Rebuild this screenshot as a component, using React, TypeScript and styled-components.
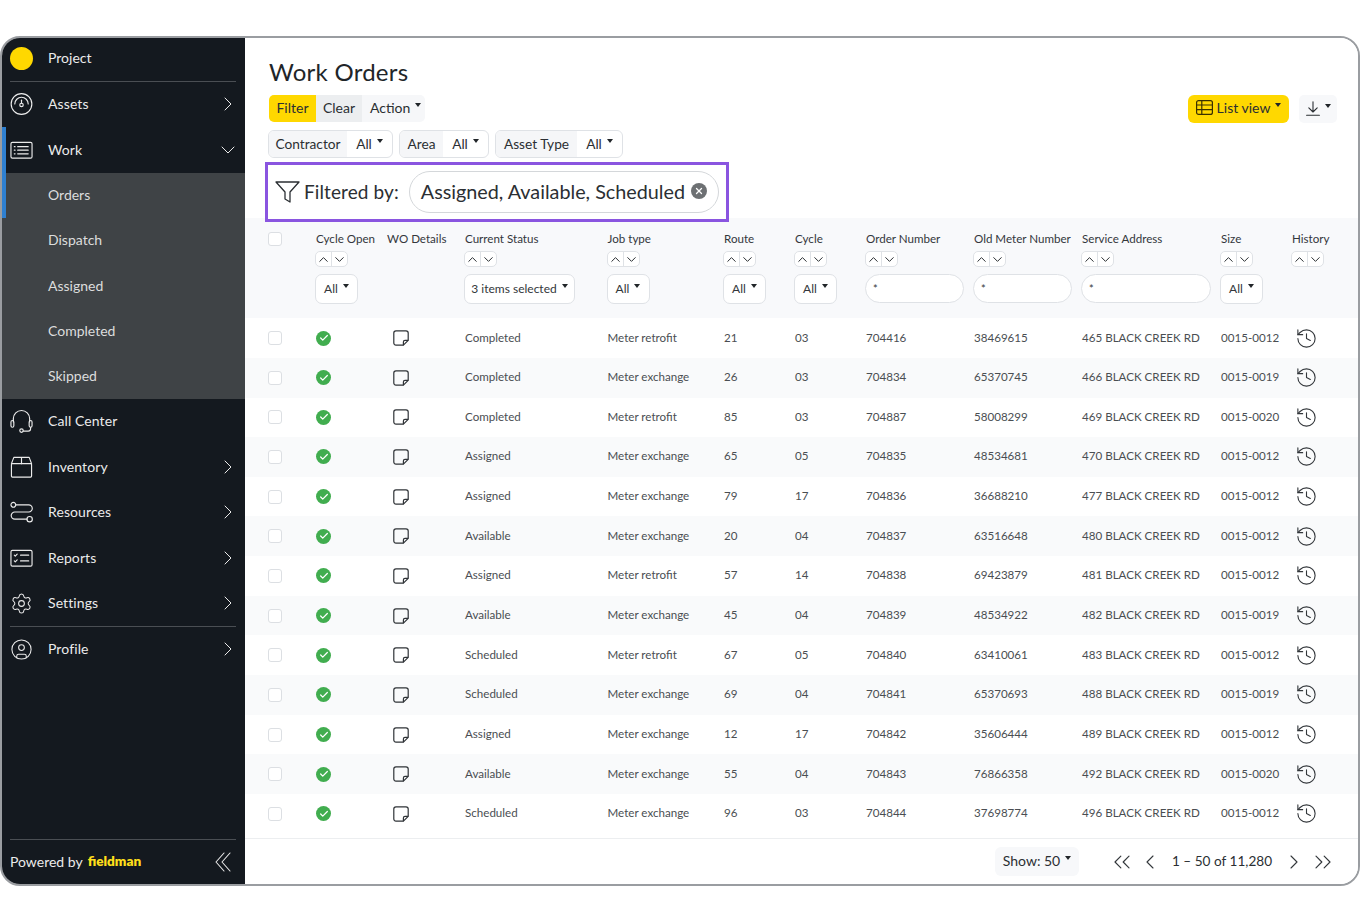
import React from "react";
import styled, { createGlobalStyle } from "styled-components";
import { ChevronRight, ChevronDown, ChevronUp, ChevronLeft, ChevronsLeft, ChevronsRight, History, Settings, CircleUser, Check, X } from "lucide-react";

const FONT = `"Lato", "Noto Sans", sans-serif`;

const Global = createGlobalStyle`
  html, body { margin: 0; padding: 0; background: #fff; }
  body { font-family: ${FONT}; color: #2b2f33; }
  * { box-sizing: border-box; }
`;

const Page = styled.div`
  width: 1360px;
  height: 920px;
  padding-top: 36px;
`;
const Frame = styled.div`
  width: 1360px;
  height: 850px;
  border: 2px solid #9a9da1;
  border-radius: 20px;
  overflow: hidden;
  display: flex;
  background: #fff;
`;
const Sidebar = styled.aside`
  width: 243px;
  flex: none;
  background: #14191f;
  color: #ebebeb;
  display: flex;
  flex-direction: column;
`;
const Divider = styled.div`
  height: 1px;
  background: #4a4e53;
  margin: 0 9px 0 8px;
  flex: none;
`;
const ProjectRow = styled.div`
  height: 43px;
  display: flex;
  align-items: center;
  padding-left: 8px;
  gap: 15px;
  font-size: 14px;
`;
const ProjectLabel = styled.span`
  padding-bottom: 5px;
`;
const Dot = styled.span`
  width: 23px;
  height: 23px;
  border-radius: 50%;
  background: #ffd800;
  margin-bottom: 3px;
`;
const NavGroup = styled.div`
  position: relative;
  flex: none;
`;
const ActiveBar = styled.span`
  position: absolute;
  left: 0;
  top: 0;
  width: 4px;
  height: 91px;
  background: #2f80d0;
  z-index: 1;
`;
const NavRow = styled.div`
  height: 45.4px;
  display: flex;
  align-items: center;
  padding: 0 5px 1px 8px;
  font-size: 14px;
  flex: none;
`;
const NavIcon = styled.span`
  width: 23px;
  height: 23px;
  margin-right: 15px;
  display: flex;
  align-items: center;
  justify-content: center;
  flex: none;
`;
const NavLabel = styled.span`
  flex: 1;
  letter-spacing: 0.1px;
  padding-bottom: 1px;
`;
const SubMenu = styled.div`
  background: #3f4346;
  color: #dcdddd;
`;
const SubRow = styled.div`
  height: 45.3px;
  display: flex;
  align-items: center;
  padding: 0 0 2px 46px;
  font-size: 14px;
`;
const SideFooter = styled.div`
  margin-top: auto;
  flex: none;
`;
const PoweredRow = styled.div`
  height: 44px;
  display: flex;
  align-items: center;
  padding: 0 14px 1px 8px;
  font-size: 14px;
`;
const PoweredText = styled.span`
  padding-bottom: 1px;
`;
const Brand = styled.span`
  color: #ffdf1a;
  font-weight: 800;
  font-size: 13.6px;
  margin-left: 5px;
  padding-bottom: 1px;
  flex: 1;
`;

const Main = styled.main`
  flex: 1;
  min-width: 0;
  display: flex;
  flex-direction: column;
  background: #fff;
`;
const Title = styled.h1`
  margin: 0;
  padding: 19px 0 0 24px;
  font-size: 24px;
  line-height: 30px;
  font-weight: 400;
  color: #212529;
  height: 57px;
  letter-spacing: 0.25px;
`;
const ActionBar = styled.div`
  display: flex;
  justify-content: space-between;
  align-items: center;
  padding: 0 21px 0 24px;
  height: 27px;
`;
const BtnGroup = styled.div`
  display: flex;
  height: 27px;
  border-radius: 5px;
  overflow: hidden;
  font-size: 14px;
`;
const GroupBtn = styled.div<{ $tone: "yellow" | "grey" | "light"; $w: number }>`
  width: ${(p) => p.$w}px;
  display: flex;
  align-items: center;
  justify-content: ${(p) => (p.$tone === "light" ? "flex-start" : "center")};
  padding: 0 0 2px ${(p) => (p.$tone === "light" ? 8 : 0)}px;
  background: ${(p) => (p.$tone === "yellow" ? "#ffd800" : p.$tone === "grey" ? "#eceef0" : "#f6f7f9")};
`;
const Caret = styled.span`
  display: inline-block;
  width: 0;
  height: 0;
  border-left: 3.5px solid transparent;
  border-right: 3.5px solid transparent;
  border-top: 4px solid #212529;
  margin-left: 5px;
  position: relative;
  top: -3px;
`;
const RightTools = styled.div`
  display: flex;
  gap: 10px;
  align-items: center;
`;
const ListViewBtn = styled.div`
  width: 101px;
  height: 28px;
  background: #ffd800;
  border-radius: 6px;
  display: flex;
  align-items: center;
  justify-content: center;
  padding-bottom: 2px;
  font-size: 14px;
`;
const ListViewText = styled.span`
  margin-left: 4px;
`;
const DownloadBtn = styled.div`
  width: 38px;
  height: 28px;
  background: #f7f8fa;
  border-radius: 5px;
  display: flex;
  align-items: center;
  justify-content: center;
`;
const FilterRow = styled.div`
  display: flex;
  gap: 6px;
  padding: 8px 0 0 23px;
  height: 36px;
  flex: none;
`;
const FilterGroup = styled.div`
  height: 28px;
  border: 1px solid #dfe2e6;
  border-radius: 6px;
  display: flex;
  overflow: hidden;
  font-size: 13.7px;
`;
const FilterName = styled.div<{ $w: number }>`
  width: ${(p) => p.$w}px;
  background: #f5f6f8;
  display: flex;
  align-items: center;
  justify-content: center;
  padding-bottom: 1px;
`;
const FilterValue = styled.div<{ $w: number }>`
  width: ${(p) => p.$w}px;
  display: flex;
  align-items: center;
  justify-content: center;
  padding-bottom: 1px;
`;
const FilteredBox = styled.div`
  position: relative;
  z-index: 1;
  margin: 4px 0 -4px 20px;
  width: 464px;
  height: 60px;
  border: 3px solid #8a55e0;
  background: #fff;
  display: flex;
  align-items: center;
  padding: 0 0 1px 7px;
  flex: none;
`;
const FilteredLabel = styled.span`
  font-size: 19px;
  margin: 0 10px 1px 4px;
  color: #2b2f33;
  letter-spacing: 0.1px;
`;
const Chip = styled.div`
  width: 310px;
  height: 42px;
  border: 1px solid #d4d7da;
  border-radius: 21px;
  display: flex;
  align-items: center;
  justify-content: space-between;
  padding: 0 11px 1px 11px;
  font-size: 19.8px;
  white-space: nowrap;
`;
const ChipClose = styled.span`
  width: 16px;
  height: 16px;
  border-radius: 50%;
  background: #6d7073;
  display: flex;
  align-items: center;
  justify-content: center;
  flex: none;
`;

const COLS = "48px 71px 78px 142.5px 116.5px 71px 71px 108px 108px 139px 71px 1fr";

const TableHead = styled.div`
  display: grid;
  grid-template-columns: ${COLS};
  padding-left: 23px;
  height: 100.2px;
  background: #f8f9fb;
  flex: none;
  padding-top: 14px;
`;
const HeadCell = styled.div`
  font-size: 11.6px;
  line-height: 14px;
  color: #33373b;
  white-space: nowrap;
  display: flex;
  flex-direction: column;
  align-items: flex-start;
`;
const SortBox = styled.div`
  width: 33px;
  height: 16px;
  margin-top: 5px;
  margin-left: -1px;
  border: 1px solid #dfe2e6;
  border-radius: 5px;
  background: #fff;
  display: flex;
  color: #2b2f33;
`;
const SortHalf = styled.span<{ $line?: boolean }>`
  flex: 1;
  display: flex;
  align-items: center;
  justify-content: center;
  border-left: ${(p) => (p.$line ? "1px solid #dfe2e6" : "none")};
`;
const HeadSelect = styled.div<{ $w: number }>`
  width: ${(p) => p.$w}px;
  height: 30px;
  margin-top: 7px;
  margin-left: -1px;
  background: #fff;
  border: 1px solid #dfe2e6;
  border-radius: 7px;
  display: flex;
  align-items: center;
  justify-content: center;
  font-size: 12px;
`;
const HeadInput = styled.div<{ $w: number }>`
  width: ${(p) => p.$w}px;
  height: 29px;
  margin-top: 7px;
  margin-left: -1px;
  background: #fff;
  border: 1px solid #dfe2e6;
  border-radius: 15px;
  padding-left: 7px;
  display: flex;
  align-items: center;
  font-size: 11px;
`;
const Rows = styled.div`
  flex: none;
`;
const Row = styled.div<{ $odd: boolean }>`
  display: grid;
  grid-template-columns: ${COLS};
  padding-left: 23px;
  height: 39.67px;
  align-items: center;
  background: ${(p) => (p.$odd ? "#f9fafb" : "#fff")};
  font-size: 11.6px;
  color: #4a4e52;
  white-space: nowrap;
`;
const CellText = styled.span`
  padding-bottom: 2px;
`;
const Checkbox = styled.span`
  display: block;
  width: 14px;
  height: 14px;
  border: 1px solid #dcdfe3;
  border-radius: 3px;
  background: #fff;
`;
const OkBadge = styled.span`
  width: 15px;
  height: 15px;
  border-radius: 50%;
  background: #41ad4f;
  display: flex;
  align-items: center;
  justify-content: center;
`;
const NoteCell = styled.span`
  display: flex;
  padding-left: 6px;
`;
const HistoryCell = styled.span`
  display: flex;
  padding-left: 2.5px;
  color: #33373b;
`;
const Pager = styled.footer`
  margin-top: auto;
  height: 46px;
  border-top: 1px solid #eceef0;
  display: flex;
  align-items: center;
  justify-content: flex-end;
  padding-right: 21px;
  font-size: 14px;
  flex: none;
  color: #2b2f33;
`;
const ShowBtn = styled.div`
  width: 84px;
  height: 29px;
  background: #f7f8fa;
  border-radius: 6px;
  display: flex;
  align-items: center;
  justify-content: center;
  padding-bottom: 2px;
  margin-right: 29px;
`;
const PagerIcon = styled.span<{ $gap: number }>`
  display: flex;
  margin-right: ${(p) => p.$gap}px;
  color: #33373b;
`;
const PagerText = styled.span`
  width: 101px;
  margin-right: 9px;
  padding-bottom: 2px;
  white-space: nowrap;
  font-size: 13.6px;
`;

const Svg = ({ children, size = 24 }: { children: React.ReactNode; size?: number }) => (
  <svg width={size} height={size} viewBox="0 0 24 24" fill="none" stroke="currentColor" strokeWidth={1.2} strokeLinecap="round" strokeLinejoin="round">
    {children}
  </svg>
);

const GaugeIcon = () => (
  <Svg>
    <circle cx="12" cy="12" r="10.8" />
    <path d="M5 12a7 7 0 0 1 14 0" />
    <circle cx="12" cy="13" r="1.8" />
    <path d="M12 11V8" />
  </Svg>
);
const ListIcon = () => (
  <Svg>
    <rect x="1" y="4" width="22" height="16.5" rx="1.5" />
    <path d="M8 8.5h11M8 12.2h11M8 16h11" />
    <path d="M4.5 8.5h.8M4.5 12.2h.8M4.5 16h.8" />
  </Svg>
);
const HeadsetIcon = () => (
  <Svg>
    <path d="M3.5 13V9.5a8.5 8.5 0 0 1 17 0V13" />
    <rect x="1" y="11.5" width="3" height="7" rx="1.5" />
    <rect x="20" y="11.5" width="3" height="7" rx="1.5" />
    <path d="M21.5 18.5v1.5a2.5 2.5 0 0 1-2.5 2.5h-5" />
    <circle cx="12" cy="22" r="1.8" />
  </Svg>
);
const BoxIcon = () => (
  <Svg>
    <rect x="1.5" y="8.5" width="21" height="14" rx="1" />
    <path d="M1.5 8.5 4 2h16l2.5 6.5M12 2v6.5" />
  </Svg>
);
const RouteIcon = () => (
  <Svg>
    <circle cx="3.5" cy="4.5" r="2.5" />
    <circle cx="20.5" cy="19.5" r="2.8" />
    <path d="M6 4.5h13.5a3.5 3.5 0 0 1 0 7.5H5a3.7 3.7 0 0 0 0 7.5h12.7" />
  </Svg>
);
const ReportIcon = () => (
  <Svg>
    <rect x="1" y="4" width="22" height="16.5" rx="1.5" />
    <path d="M11 9h8.5M11 15h8.5" />
    <path d="M4.5 9l1 1 2-2M4.5 15l1 1 2-2" />
  </Svg>
);
const NoteIcon = () => (
  <svg width="16" height="16" viewBox="0 0 16 16" fill="none" stroke="#2f3337" strokeWidth={1.2} strokeLinejoin="round">
    <path d="M3 .8h10A2.2 2.2 0 0 1 15.2 3v7.4l-4.8 4.8H3A2.2 2.2 0 0 1 .8 13V3A2.2 2.2 0 0 1 3 .8Z" />
    <path d="M15.2 10.4h-3.2a1.6 1.6 0 0 0-1.6 1.6v3.2" />
  </svg>
);
const FunnelIcon = () => (
  <svg width="25" height="22" viewBox="0 0 25 22" fill="none" stroke="#2b2f33" strokeWidth={1.3} strokeLinejoin="round">
    <path d="M1 1h23l-9 10v10l-5-3v-7L1 1Z" />
  </svg>
);
const TableIcon = () => (
  <svg width="17" height="15" viewBox="0 0 17 15" fill="none" stroke="#3a3000" strokeWidth={1.2}>
    <rect x=".6" y=".6" width="15.8" height="13.8" rx="2" />
    <path d="M.6 5h15.8M.6 9.7h15.8M5.8 .6v13.8" />
  </svg>
);
const DownloadIcon = () => (
  <svg width="14" height="15" viewBox="0 0 14 15" fill="none" stroke="#2b2f33" strokeWidth={1.1} strokeLinecap="round" strokeLinejoin="round">
    <path d="M7 .8v10M2.8 6.8 7 11l4.2-4.2M.6 14.2h12.8" />
  </svg>
);
const CollapseIcon = () => (
  <svg width="16" height="20" viewBox="0 0 16 20" fill="none" stroke="#ebebeb" strokeWidth={1.1} strokeLinecap="round" strokeLinejoin="round">
    <path d="M9 1 1 10l8 9M15 1l-8 9 8 9" />
  </svg>
);

const Chev = () => <ChevronRight size={24} strokeWidth={1} />;

const rows = [
  ["Completed", "Meter retrofit", "21", "03", "704416", "38469615", "465 BLACK CREEK RD", "0015-0012"],
  ["Completed", "Meter exchange", "26", "03", "704834", "65370745", "466 BLACK CREEK RD", "0015-0019"],
  ["Completed", "Meter retrofit", "85", "03", "704887", "58008299", "469 BLACK CREEK RD", "0015-0020"],
  ["Assigned", "Meter exchange", "65", "05", "704835", "48534681", "470 BLACK CREEK RD", "0015-0012"],
  ["Assigned", "Meter exchange", "79", "17", "704836", "36688210", "477 BLACK CREEK RD", "0015-0012"],
  ["Available", "Meter exchange", "20", "04", "704837", "63516648", "480 BLACK CREEK RD", "0015-0012"],
  ["Assigned", "Meter retrofit", "57", "14", "704838", "69423879", "481 BLACK CREEK RD", "0015-0012"],
  ["Available", "Meter exchange", "45", "04", "704839", "48534922", "482 BLACK CREEK RD", "0015-0019"],
  ["Scheduled", "Meter retrofit", "67", "05", "704840", "63410061", "483 BLACK CREEK RD", "0015-0012"],
  ["Scheduled", "Meter exchange", "69", "04", "704841", "65370693", "488 BLACK CREEK RD", "0015-0019"],
  ["Assigned", "Meter exchange", "12", "17", "704842", "35606444", "489 BLACK CREEK RD", "0015-0012"],
  ["Available", "Meter exchange", "55", "04", "704843", "76866358", "492 BLACK CREEK RD", "0015-0020"],
  ["Scheduled", "Meter exchange", "96", "03", "704844", "37698774", "496 BLACK CREEK RD", "0015-0012"],
];

const Sort = () => (
  <SortBox>
    <SortHalf><ChevronUp size={15} strokeWidth={1.6} /></SortHalf>
    <SortHalf $line><ChevronDown size={15} strokeWidth={1.6} /></SortHalf>
  </SortBox>
);

const Select = ({ w, label }: { w: number; label: string }) => (
  <HeadSelect $w={w}>
    {label}
    <Caret />
  </HeadSelect>
);

export default function App() {
  return (
    <Page>
      <Global />
      <Frame>
        <Sidebar>
          <ProjectRow>
            <Dot />
            <ProjectLabel>Project</ProjectLabel>
          </ProjectRow>
          <Divider />
          <NavRow>
            <NavIcon><GaugeIcon /></NavIcon>
            <NavLabel>Assets</NavLabel>
            <Chev />
          </NavRow>
          <NavGroup>
            <ActiveBar />
            <NavRow>
              <NavIcon><ListIcon /></NavIcon>
              <NavLabel>Work</NavLabel>
              <ChevronDown size={24} strokeWidth={1} />
            </NavRow>
            <SubMenu>
              {["Orders", "Dispatch", "Assigned", "Completed", "Skipped"].map((s) => (
                <SubRow key={s}>{s}</SubRow>
              ))}
            </SubMenu>
          </NavGroup>
          <NavRow>
            <NavIcon><HeadsetIcon /></NavIcon>
            <NavLabel>Call Center</NavLabel>
          </NavRow>
          <NavRow>
            <NavIcon><BoxIcon /></NavIcon>
            <NavLabel>Inventory</NavLabel>
            <Chev />
          </NavRow>
          <NavRow>
            <NavIcon><RouteIcon /></NavIcon>
            <NavLabel>Resources</NavLabel>
            <Chev />
          </NavRow>
          <NavRow>
            <NavIcon><ReportIcon /></NavIcon>
            <NavLabel>Reports</NavLabel>
            <Chev />
          </NavRow>
          <NavRow>
            <NavIcon><Settings size={27} strokeWidth={1.1} /></NavIcon>
            <NavLabel>Settings</NavLabel>
            <Chev />
          </NavRow>
          <Divider />
          <NavRow>
            <NavIcon><CircleUser size={27} strokeWidth={1.1} /></NavIcon>
            <NavLabel>Profile</NavLabel>
            <Chev />
          </NavRow>
          <SideFooter>
            <Divider />
            <PoweredRow>
              <PoweredText>Powered by</PoweredText>
              <Brand>fieldman</Brand>
              <CollapseIcon />
            </PoweredRow>
          </SideFooter>
        </Sidebar>
        <Main>
          <Title>Work Orders</Title>
          <ActionBar>
            <BtnGroup>
              <GroupBtn $tone="yellow" $w={47}>Filter</GroupBtn>
              <GroupBtn $tone="grey" $w={46}>Clear</GroupBtn>
              <GroupBtn $tone="light" $w={63}>Action<Caret /></GroupBtn>
            </BtnGroup>
            <RightTools>
              <ListViewBtn>
                <TableIcon />
                <ListViewText>List view</ListViewText>
                <Caret />
              </ListViewBtn>
              <DownloadBtn>
                <DownloadIcon />
                <Caret />
              </DownloadBtn>
            </RightTools>
          </ActionBar>
          <FilterRow>
            <FilterGroup>
              <FilterName $w={78}>Contractor</FilterName>
              <FilterValue $w={45}>All<Caret /></FilterValue>
            </FilterGroup>
            <FilterGroup>
              <FilterName $w={43}>Area</FilterName>
              <FilterValue $w={45}>All<Caret /></FilterValue>
            </FilterGroup>
            <FilterGroup>
              <FilterName $w={81}>Asset Type</FilterName>
              <FilterValue $w={45}>All<Caret /></FilterValue>
            </FilterGroup>
          </FilterRow>
          <FilteredBox>
            <FunnelIcon />
            <FilteredLabel>Filtered by:</FilteredLabel>
            <Chip>
              Assigned, Available, Scheduled
              <ChipClose><X size={10} color="#fff" strokeWidth={3} /></ChipClose>
            </Chip>
          </FilteredBox>
          <TableHead>
            <HeadCell><Checkbox /></HeadCell>
            <HeadCell>Cycle Open<Sort /><Select w={43} label="All" /></HeadCell>
            <HeadCell>WO Details</HeadCell>
            <HeadCell>Current Status<Sort /><Select w={111} label="3 items selected" /></HeadCell>
            <HeadCell>Job type<Sort /><Select w={43} label="All" /></HeadCell>
            <HeadCell>Route<Sort /><Select w={43} label="All" /></HeadCell>
            <HeadCell>Cycle<Sort /><Select w={43} label="All" /></HeadCell>
            <HeadCell>Order Number<Sort /><HeadInput $w={99}>*</HeadInput></HeadCell>
            <HeadCell>Old Meter Number<Sort /><HeadInput $w={99}>*</HeadInput></HeadCell>
            <HeadCell>Service Address<Sort /><HeadInput $w={130}>*</HeadInput></HeadCell>
            <HeadCell>Size<Sort /><Select w={43} label="All" /></HeadCell>
            <HeadCell>History<Sort /></HeadCell>
          </TableHead>
          <Rows>
            {rows.map((r, i) => (
              <Row key={r[4]} $odd={i % 2 === 1}>
                <Checkbox />
                <OkBadge><Check size={10} color="#fff" strokeWidth={3} /></OkBadge>
                <NoteCell><NoteIcon /></NoteCell>
                {r.map((c, j) => (
                  <CellText key={j}>{c}</CellText>
                ))}
                <HistoryCell><History size={23} strokeWidth={1.15} /></HistoryCell>
              </Row>
            ))}
          </Rows>
          <Pager>
            <ShowBtn>Show: 50<Caret /></ShowBtn>
            <PagerIcon $gap={2}><ChevronsLeft size={28} strokeWidth={1} /></PagerIcon>
            <PagerIcon $gap={10}><ChevronLeft size={24} strokeWidth={1.1} /></PagerIcon>
            <PagerText>1 – 50 of 11,280</PagerText>
            <PagerIcon $gap={3}><ChevronRight size={24} strokeWidth={1.1} /></PagerIcon>
            <PagerIcon $gap={0}><ChevronsRight size={28} strokeWidth={1} /></PagerIcon>
          </Pager>
        </Main>
      </Frame>
    </Page>
  );
}
